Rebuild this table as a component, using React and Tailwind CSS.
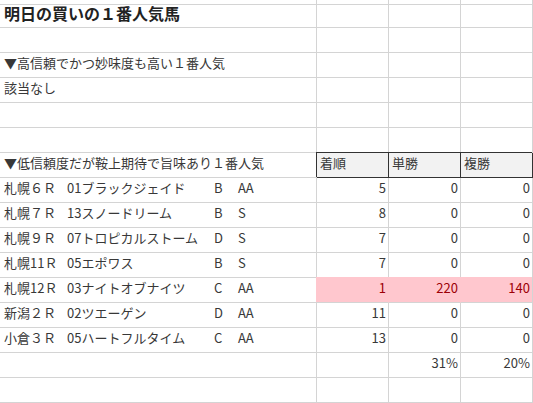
const races = [
  { race: "札幌６Ｒ", horse: "01ブラックジェイド", grade: "B", mark: "AA", rank: "5", win: "0", place: "0" },
  { race: "札幌７Ｒ", horse: "13スノードリーム", grade: "B", mark: "S", rank: "8", win: "0", place: "0" },
  { race: "札幌９Ｒ", horse: "07トロピカルストーム", grade: "D", mark: "S", rank: "7", win: "0", place: "0" },
  { race: "札幌11Ｒ", horse: "05エポワス", grade: "B", mark: "S", rank: "7", win: "0", place: "0" },
  { race: "札幌12Ｒ", horse: "03ナイトオブナイツ", grade: "C", mark: "AA", rank: "1", win: "220", place: "140", hit: true },
  { race: "新潟２Ｒ", horse: "02ツエーゲン", grade: "D", mark: "AA", rank: "11", win: "0", place: "0" },
  { race: "小倉３Ｒ", horse: "05ハートフルタイム", grade: "C", mark: "AA", rank: "13", win: "0", place: "0" },
]

function Row({ h = "h-[25px]", left, cells = ["", "", ""], variant }) {
  return (
    <div className={`flex ${h}`}>
      <div className="w-[317px] shrink-0 border-r border-b border-[#d4d4d4] flex items-center pl-1 pb-[4px] whitespace-nowrap overflow-visible">
        {left}
      </div>
      {cells.map((c, i) => {
        let cls = "border-r border-b border-[#d4d4d4] justify-end pr-[2px]"
        if (variant === "header") {
          cls = "border-r border-b border-[#333] bg-[#f2f2f2] shadow-[-1px_-1px_0_#333] justify-start pl-[3px]"
        } else if (variant === "hit") {
          cls =
            i < 2
              ? "border-r border-b border-r-[#ffc7ce] border-b-[#d4d4d4] bg-[#ffc7ce] text-[#9c0006] shadow-[-1px_-1px_0_#ffc7ce] justify-end pr-[2px]"
              : "border-r border-b border-[#d4d4d4] bg-[#ffc7ce] text-[#9c0006] shadow-[-1px_-1px_0_#ffc7ce] justify-end pr-[2px]"
        }
        return (
          <div key={i} className={`w-[72px] shrink-0 flex items-center pb-[4px] ${cls}`}>
            {c}
          </div>
        )
      })}
    </div>
  )
}

function RaceLine({ r }) {
  return (
    <div className="grid grid-cols-[63px_147px_24px_60px] items-center">
      <span>{r.race}</span>
      <span>{r.horse}</span>
      <span>{r.grade}</span>
      <span>{r.mark}</span>
    </div>
  )
}

export default function App() {
  return (
    <div className="w-[533px] h-[403px] overflow-hidden bg-white text-[13px] text-[#383838] font-['Noto_Sans_CJK_JP','Noto_Sans',sans-serif]">
      <Row h="h-[2px]" />
      <Row
        h="h-[26px]"
        left={<span className="text-[16px] font-bold text-[#222]">明日の買いの１番人気馬</span>}
      />
      <Row />
      <Row left="▼高信頼でかつ妙味度も高い１番人気" />
      <Row left="該当なし" />
      <Row />
      <Row />
      <Row left="▼低信頼度だが鞍上期待で旨味あり１番人気" cells={["着順", "単勝", "複勝"]} variant="header" />
      {races.map((r, i) => (
        <Row
          key={i}
          left={<RaceLine r={r} />}
          cells={[r.rank, r.win, r.place]}
          variant={r.hit ? "hit" : undefined}
        />
      ))}
      <Row cells={["", "31%", "20%"]} />
      <Row />
    </div>
  )
}
